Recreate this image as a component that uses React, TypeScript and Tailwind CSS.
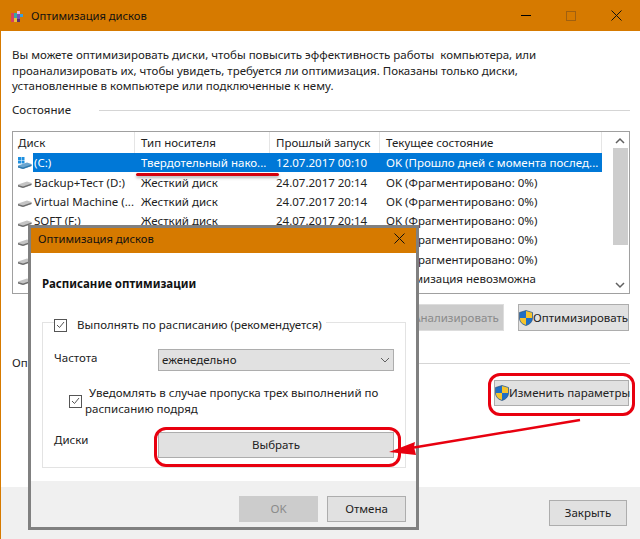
import React from 'react';

const font = "font-['Noto_Sans',sans-serif]";

const rows = [
  { name: '(C:)', type: 'Твердотельный нако...', date: '12.07.2017 00:10', state: 'OK (Прошло дней с момента послед...', system: true },
  { name: 'Backup+Тест (D:)', type: 'Жесткий диск', date: '24.07.2017 20:14', state: 'OK (Фрагментировано: 0%)' },
  { name: 'Virtual Machine (...', type: 'Жесткий диск', date: '24.07.2017 20:14', state: 'OK (Фрагментировано: 0%)' },
  { name: 'SOFT (F:)', type: 'Жесткий диск', date: '24.07.2017 20:14', state: 'OK (Фрагментировано: 0%)' },
  { name: '', type: '', date: '', state: 'OK (Фрагментировано: 0%)' },
  { name: '', type: '', date: '', state: 'OK (Фрагментировано: 0%)' },
  { name: '', type: '', date: '', state: 'Оптимизация невозможна' },
];

const Shield = () => (
  <svg width="14" height="16" viewBox="0 0 14 16" className="shrink-0">
    <path d="M7 0.5 L13.5 2.5 V8 C13.5 12 10.5 14.5 7 15.5 C3.5 14.5 0.5 12 0.5 8 V2.5 Z" fill="#1f6fc4" stroke="#27496d" strokeWidth="0.6" />
    <path d="M7 1 L13 2.8 V8 H7 Z" fill="#f5c42c" />
    <path d="M1 8 H7 V15 C3.8 14 1 12 1 8 Z" fill="#f5c42c" />
  </svg>
);

const DriveIcon = ({ system }: { system?: boolean }) => (
  <svg width="15" height="14" viewBox="0 0 15 14" className="shrink-0">
    {system && (
      <g fill="#1c8fe0">
        <rect x="1" y="1" width="3" height="3" />
        <rect x="4.5" y="1" width="3" height="3" />
        <rect x="1" y="4.5" width="3" height="3" />
        <rect x="4.5" y="4.5" width="3" height="3" />
      </g>
    )}
    <path d="M1 9.5 L10 6.5 L14.5 8 V10 L6 13 L1 11.5 Z" fill={system ? '#6aa5cf' : '#c4c4c4'} />
    <path d="M1 10 L6 11.5 L14.5 8.5 V10 L6 13 L1 11.5 Z" fill={system ? '#2f79ad' : '#6e6e6e'} />
  </svg>
);

const AppIcon = () => (
  <svg width="14" height="14" viewBox="0 0 14 14">
    <rect x="1" y="4" width="3" height="9" fill="#d8405f" />
    <rect x="4" y="4" width="3" height="5" fill="#38a9a0" />
    <rect x="4" y="9" width="3" height="4" fill="#e8c23a" />
    <rect x="7" y="2" width="3" height="3" fill="#e9b8d8" />
    <rect x="7" y="5" width="3" height="5" fill="#7a4fb5" />
    <rect x="10" y="5" width="3" height="3" fill="#3c9fd8" />
    <rect x="7" y="10" width="3" height="3" fill="#5a2f6f" />
  </svg>
);

const Button = ({ children, className = '' }: { children: React.ReactNode; className?: string }) => (
  <div className={`flex items-center justify-center bg-[#e1e1e1] border border-[#adadad] text-[#222] ${className}`}>{children}</div>
);

const Check = ({ className = '' }: { className?: string }) => (
  <div className={`w-[13px] h-[13px] bg-white border border-[#555] flex items-center justify-center shrink-0 ${className}`}>
    <svg width="9" height="8" viewBox="0 0 9 8">
      <path d="M1 4 L3.5 6.5 L8 1" fill="none" stroke="#555" strokeWidth="1" />
    </svg>
  </div>
);

export default function App() {
  return (
    <div className={`relative w-[640px] h-[539px] overflow-hidden flex flex-col bg-white text-[11.5px] leading-[16px] text-[#222] ${font}`}>
      {/* main window */}
      <div className="h-[31px] bg-[#d67a00] flex items-center pl-[10px] shrink-0">
        <AppIcon />
        <span className="ml-[7px] text-[#111] text-[11.2px]">Оптимизация дисков</span>
        <div className="ml-auto flex items-center pr-[18px] gap-[35px]">
          <div className="w-[10px] h-px bg-black" />
          <div className="w-[10px] h-[10px] border border-[#a06010]" />
          <svg width="11" height="11" viewBox="0 0 11 11"><path d="M0.5 0.5 L10.5 10.5 M10.5 0.5 L0.5 10.5" stroke="#111" strokeWidth="1" /></svg>
        </div>
      </div>
      <div className="flex-1 flex flex-col border-l border-[#d67a00] pl-[11px] pr-[10px] pt-[16px]">
        <p className="leading-[15.7px]">
          Вы можете оптимизировать диски, чтобы повысить эффективность работы&nbsp; компьютера, или<br />
          проанализировать их, чтобы увидеть, требуется ли оптимизация. Показаны только диски,<br />
          установленные в компьютере или подключенные к нему.
        </p>
        <div className="mt-[8px] flex items-center gap-[28px]">
          <span>Состояние</span>
          <div className="flex-1 h-px bg-[#d5d5d5]" />
        </div>
        <div className="mt-[13px] h-[163px] border border-[#a0a0a0] flex shrink-0">
          <div className="w-[599px] shrink-0">
            <div className="h-[21px] grid grid-cols-[122px_135px_110px_222px] items-center">
              <div className="pl-[5px] border-r border-[#e5e5e5] h-full flex items-center">Диск</div>
              <div className="pl-[6px] border-r border-[#e5e5e5] h-full flex items-center">Тип носителя</div>
              <div className="pl-[6px] border-r border-[#e5e5e5] h-full flex items-center">Прошлый запуск</div>
              <div className="pl-[6px] border-r border-[#e5e5e5] h-full flex items-center">Текущее состояние</div>
            </div>
            {rows.map((row, i) => (
              <div key={i} className="h-[19.3px] flex items-center relative pl-[4px]">
                <DriveIcon system={row.system} />
                <div className={`ml-[1px] w-[569px] h-full pt-[1px] grid grid-cols-[102px_135px_110px_222px] items-center whitespace-nowrap ${row.system ? 'bg-[#0078d7] text-white' : ''}`}>
                  <span className="pl-[1px]">{row.name}</span>
                  <span className="pl-[6px]">{row.type}</span>
                  <span className="pl-[6px]">{row.date}</span>
                  <span className="pl-[6px]">{row.state}</span>
                </div>
              </div>
            ))}
          </div>
          <div className="flex-1 flex flex-col items-center pr-[1px]">
            <svg width="10" height="16" viewBox="0 0 10 16" className="shrink-0"><path d="M1 11 L5 7 L9 11" fill="none" stroke="#606060" strokeWidth="1.5" /></svg>
            <div className="w-[15px] h-[97px] bg-[#cdcdcd]" />
            <div className="flex-1" />
            <svg width="10" height="16" viewBox="0 0 10 16" className="shrink-0"><path d="M1 6 L5 10 L9 6" fill="none" stroke="#606060" strokeWidth="1.5" /></svg>
          </div>
        </div>
        <div className="mt-[10px] flex justify-end gap-[14px] pr-[1px]">
          <Button className="w-[96px] h-[27px] !bg-[#cccccc] !border-[#dddddd] !text-[#8a8a8a]">Анализировать</Button>
          <Button className="w-[111px] h-[27px] !justify-start whitespace-nowrap"><Shield />Оптимизировать</Button>
        </div>
        <div className="mt-[24px] flex items-center">
          <span className="w-[17px] whitespace-nowrap">Оп</span>
          <div className="flex-1 ml-[200px] h-px bg-[#d5d5d5]" />
        </div>
        <div className="mt-[9px] flex justify-end pr-[1px]">
          <Button className="w-[135px] h-[26px] !justify-start whitespace-nowrap"><Shield />Изменить параметры</Button>
        </div>
      </div>
      <div className="h-[52px] bg-[#f0f0f0] border-l border-[#d67a00] shrink-0 flex items-start justify-end pt-[13px] pr-[13px]">
        <Button className="w-[78px] h-[26px]">Закрыть</Button>
      </div>

      {/* dialog on top */}
      <div className="absolute left-[28px] top-[225px] w-[391px] h-[305px] border-[3px] border-[#808080] bg-white flex flex-col">
        <div className="h-[25px] bg-[#d67a00] shrink-0 flex items-center pl-[7px] pr-[11px] pb-[4px] justify-between">
          <span className="text-[#111] text-[11.2px]">Оптимизация дисков</span>
          <svg width="11" height="11" viewBox="0 0 11 11"><path d="M0.5 0.5 L10.5 10.5 M10.5 0.5 L0.5 10.5" stroke="#111" strokeWidth="1" /></svg>
        </div>
        <div className="flex-1 flex flex-col pl-[11px] pr-[10px] pt-[23px]">
          <div className="font-bold text-[#111]">Расписание оптимизации</div>
          <div className="relative mt-[30px] h-[146px] border border-[#e3e3e3] px-[11px]">
            <div className="absolute left-[11px] -top-[6px] flex items-center gap-[10px] bg-white pr-[4px]">
              <Check />
              <span>Выполнять по расписанию (рекомендуется)</span>
            </div>
            <div className="mt-[26px] flex items-center h-[22px]">
              <span className="w-[105px] pb-[5px]">Частота</span>
              <div className="w-[238px] h-[22px] bg-[#e1e1e1] border border-[#adadad] flex items-center justify-between pl-[3px] pr-[3px]">
                <span>еженедельно</span>
                <svg width="10" height="6" viewBox="0 0 10 6"><path d="M1 1 L5 5 L9 1" fill="none" stroke="#606060" strokeWidth="1" /></svg>
              </div>
            </div>
            <div className="mt-[14px] flex items-center pl-[15px] gap-[3px]">
              <Check />
              <div className="leading-[16px]">
                <div className="pl-[4px]">Уведомлять в случае пропуска трех выполнений по</div>
                <div>расписанию подряд</div>
              </div>
            </div>
            <div className="mt-[15px] flex items-center h-[26px]">
              <span className="w-[105px] pb-[10px]">Диски</span>
              <Button className="w-[236px] h-[26px] shrink-0">Выбрать</Button>
            </div>
          </div>
        </div>
        <div className="h-[46px] bg-[#f0f0f0] shrink-0 flex items-start justify-end gap-[9px] pt-[15px] pr-[10px]">
          <Button className="w-[79px] h-[26px] !bg-[#cccccc] !border-[#cccccc] !text-[#8a8a8a]">OK</Button>
          <Button className="w-[79px] h-[26px]">Отмена</Button>
        </div>
      </div>

      {/* red annotations */}
      <div className="absolute left-[154px] top-[427px] w-[247px] h-[40px] border-[3px] border-[#e8000f] rounded-[12px]" />
      <div className="absolute left-[488px] top-[373px] w-[147px] h-[43px] border-[3px] border-[#e8000f] rounded-[12px]" />
      <div className="absolute left-[136px] top-[173px] w-[143px] h-[3px] bg-[#d4000c] rounded-full shadow-[0_2px_3px_rgba(0,0,0,0.3)]" />
      <svg className="absolute left-0 top-0 pointer-events-none" width="640" height="539" viewBox="0 0 640 539">
        <path d="M580 420 L414 447.5" stroke="#e8000f" strokeWidth="2.5" />
        <path d="M389 452 L415 442 L414 447 L416 455 Z" fill="#e8000f" />
      </svg>
    </div>
  );
}
